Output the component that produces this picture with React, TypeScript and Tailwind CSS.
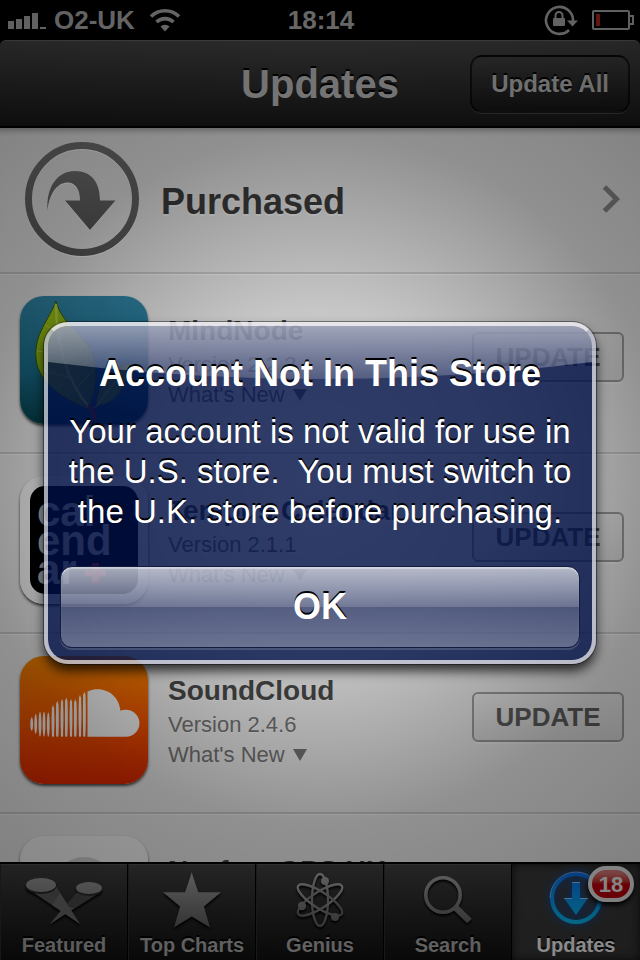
import type { ReactNode } from 'react';

type AppUpdate = {
  name: string;
  version: string;
  icon: ReactNode;
};

/* App icons */

function MindNodeIcon() {
  return (
    <svg viewBox="0 0 128 128" className="h-full w-full" aria-hidden="true">
      <defs>
        <linearGradient id="mn-bg" x1="0" y1="0" x2="0" y2="1">
          <stop offset="0" stopColor="#3289ab" />
          <stop offset="0.6" stopColor="#176884" />
          <stop offset="1" stopColor="#053e49" />
        </linearGradient>
        <linearGradient id="mn-leaf" x1="0" y1="0" x2="1" y2="1">
          <stop offset="0" stopColor="#a9cf19" />
          <stop offset="0.5" stopColor="#7fae0c" />
          <stop offset="1" stopColor="#3f6f12" />
        </linearGradient>
      </defs>
      <rect width="128" height="128" rx="24" fill="url(#mn-bg)" />
      <path
        d="M36 5C29 24 14 38 16 62C18 88 46 104 68 113C80 88 79 62 64 44C54 32 41 24 36 5Z"
        fill="url(#mn-leaf)"
        stroke="#35560f"
        strokeWidth="1"
      />
      <path
        d="M110 67C94 72 77 84 76 110C92 108 106 98 110 67Z"
        fill="#5d8d1c"
        stroke="#35560f"
        strokeWidth="1"
      />
      <g fill="none" stroke="#c3d956" strokeOpacity="0.75">
        <path d="M36 8C36 45 46 86 70 112" strokeWidth="2.5" />
        <path d="M37 36L25 29M38 38L50 30M41 58L17 55M44 68L66 48M50 82L23 74M56 93L75 72M107 70L75 112" />
      </g>
      <path d="M69 108C72 114 74 118 75 124" fill="none" stroke="#7c2b15" strokeWidth="4" />
    </svg>
  );
}

function CalendarIcon() {
  return (
    <svg viewBox="0 0 128 128" className="h-full w-full" aria-hidden="true">
      <rect width="128" height="128" rx="24" fill="#f4f4f4" />
      <rect x="10" y="10" width="108" height="108" rx="15" fill="#000" />
      <g fill="#c4c4c4" fontFamily="Liberation Sans, Arial, sans-serif" fontWeight="700" fontSize="42">
        <text x="17" y="50">cal</text>
        <text x="17" y="79">end</text>
        <text x="17" y="108">ar</text>
      </g>
      <path d="M72 87h7v7h7v6h-7v7h-7v-7h-7v-6h7z" fill="#e01a1a" />
    </svg>
  );
}

const soundBars = [
  [11.7, 61.3, 74.7],
  [15.7, 58, 78],
  [20, 55.7, 80.7],
  [24, 55.7, 80.7],
  [28.3, 56.3, 80.7],
  [33, 49.3, 80.7],
  [37.3, 45, 80.7],
  [42, 43, 80.7],
  [46.3, 41.7, 80.7],
  [51, 43, 80.7],
  [55.3, 43.3, 80.7],
  [60, 39, 80.7],
  [64.3, 35.7, 80.7],
];

function SoundCloudIcon() {
  return (
    <svg viewBox="0 0 128 128" className="h-full w-full" aria-hidden="true">
      <defs>
        <linearGradient id="sc-bg" x1="0" y1="0" x2="0" y2="1">
          <stop offset="0" stopColor="#ef8200" />
          <stop offset="0.5" stopColor="#ee5400" />
          <stop offset="1" stopColor="#dc2700" />
        </linearGradient>
      </defs>
      <rect width="128" height="128" rx="24" fill="url(#sc-bg)" />
      <g fill="#f4f4f4">
        {soundBars.map(([x, top, bottom]) => (
          <ellipse
            key={x}
            cx={x}
            cy={(top + bottom) / 2}
            rx="1.4"
            ry={(bottom - top) / 2}
          />
        ))}
        {soundBars.slice(5).map(([x, top, bottom]) => (
          <rect key={x} x={x - 1.1} y={top + 2} width="2.2" height={bottom - top - 2} rx="1" />
        ))}
        <path d="M67.5 35.5C71 33.7 74 33.2 77.5 33.2C90 33.2 99.6 42.5 100.4 54.8C102 54.1 104 53.8 106 53.8A13.4 13.4 0 0 1 106 80.7H67.5Z" />
      </g>
    </svg>
  );
}

function NavfreeIcon() {
  return (
    <svg viewBox="0 0 128 128" className="h-full w-full" aria-hidden="true">
      <rect width="128" height="128" rx="24" fill="#f4f4f4" />
      <circle cx="64" cy="53" r="32" fill="#cfcfcf" />
      <circle cx="64" cy="57" r="30" fill="#e4e4e4" />
    </svg>
  );
}

/* Tab bar icons, all painted with the same top to bottom grey */

function TabIcon({ id, children }: { id: string; children: ReactNode }) {
  return (
    <svg
      viewBox="0 0 84 60"
      className="h-[60px] w-[84px] drop-shadow-[0_2px_1px_#000]"
      aria-hidden="true"
    >
      <defs>
        <linearGradient id={id} gradientUnits="userSpaceOnUse" x1="0" y1="0" x2="0" y2="60">
          <stop offset="0" stopColor="#a0a0a0" />
          <stop offset="1" stopColor="#585858" />
        </linearGradient>
      </defs>
      {children}
    </svg>
  );
}

function FeaturedIcon() {
  return (
    <TabIcon id="tab-featured">
      <path d="M55 22L28 54L79 22Z" fill="#484848" />
      <path d="M52 38L28 54L42 37Z" fill="#686868" />
      <path d="M6 19L58 54L34 16Z" fill="#585858" />
      <path d="M38 23L58 54L30 35Z" fill="#747474" fillOpacity="0.6" />
      <ellipse cx="67" cy="20" rx="13" ry="6" fill="#2a2a2a" />
      <ellipse cx="67" cy="18" rx="13" ry="6" fill="url(#tab-featured)" />
      <ellipse cx="19" cy="17" rx="15" ry="7" fill="#2a2a2a" />
      <ellipse cx="19" cy="15" rx="15" ry="7" fill="url(#tab-featured)" />
    </TabIcon>
  );
}

function TopChartsIcon() {
  return (
    <TabIcon id="tab-charts">
      <path
        d="M41.7 2.3L48.3 22.3H71L54 36.5L60 57.5L41.7 46.5L24 57.5L30 36.5L13 22.3H35Z"
        fill="url(#tab-charts)"
      />
    </TabIcon>
  );
}

function GeniusIcon() {
  return (
    <TabIcon id="tab-genius">
      <g fill="none" stroke="url(#tab-genius)" strokeWidth="2.4">
        <ellipse cx="42" cy="30" rx="8" ry="26" />
        <ellipse cx="42" cy="30" rx="8" ry="26" transform="rotate(57 42 30)" />
        <ellipse cx="42" cy="30" rx="8" ry="26" transform="rotate(-57 42 30)" />
      </g>
      <g fill="url(#tab-genius)">
        <circle cx="47" cy="11" r="4" />
        <circle cx="24" cy="36" r="4.2" />
        <circle cx="57" cy="47" r="4" />
      </g>
    </TabIcon>
  );
}

function SearchIcon() {
  return (
    <TabIcon id="tab-search">
      <g fill="none" stroke="url(#tab-search)">
        <circle cx="37" cy="25" r="17.2" strokeWidth="3.6" />
        <path d="M50 38L63.5 51" strokeWidth="6.5" />
      </g>
    </TabIcon>
  );
}

function UpdatesIcon() {
  return (
    <svg
      viewBox="0 0 84 60"
      className="h-[60px] w-[84px] overflow-visible drop-shadow-[0_0_4px_#0050c0]"
      aria-hidden="true"
    >
      <defs>
        <linearGradient id="tab-updates" gradientUnits="userSpaceOnUse" x1="0" y1="0" x2="0" y2="54">
          <stop offset="0" stopColor="#0a68e8" />
          <stop offset="1" stopColor="#08bdf0" />
        </linearGradient>
      </defs>
      <circle cx="42" cy="28" r="24" fill="none" stroke="url(#tab-updates)" strokeWidth="4" />
      <path d="M16 28A26 26 0 0 1 68 28" fill="none" stroke="#c8e4ff" strokeOpacity="0.5" />
      <path d="M38 12H46V28H54L42 45L30 28H38Z" fill="url(#tab-updates)" />
      <path d="M38 12.5H46M30 28.5H38M46 28.5H54" stroke="#c8e4ff" strokeOpacity="0.7" />
    </svg>
  );
}

const updates: AppUpdate[] = [
  { name: 'MindNode', version: '2.2.2', icon: <MindNodeIcon /> },
  { name: 'Tempus Calendar', version: '2.1.1', icon: <CalendarIcon /> },
  { name: 'SoundCloud', version: '2.4.6', icon: <SoundCloudIcon /> },
  { name: 'Navfree GPS UK', version: '1.8.2', icon: <NavfreeIcon /> },
];

const tabs = [
  { label: 'Featured', icon: <FeaturedIcon /> },
  { label: 'Top Charts', icon: <TopChartsIcon /> },
  { label: 'Genius', icon: <GeniusIcon /> },
  { label: 'Search', icon: <SearchIcon /> },
  { label: 'Updates', icon: <UpdatesIcon />, badge: 18 },
];

function StatusBar() {
  return (
    <div className="grid h-10 shrink-0 grid-cols-[1fr_auto_1fr] items-center bg-black pr-1.5 pl-2 text-[26px] leading-10 font-bold text-[#b4b4b4]">
      <div className="flex items-center gap-2">
        <svg viewBox="0 0 38 20" className="h-5 w-[38px]" fill="currentColor" aria-hidden="true">
          <path d="M0 11h6v8H0zM8 9h6v10H8zM16 6h6v13h-6zM24 3h6v16h-6zM32 17h6v2h-6z" />
        </svg>
        <span>O2-UK</span>
        <svg viewBox="0 0 32 24" className="ml-1.5 h-6 w-8" aria-hidden="true">
          <g fill="none" stroke="currentColor" strokeWidth="3.6">
            <path d="M2 8.5A20 20 0 0 1 30 8.5" />
            <path d="M7.5 14A12.5 12.5 0 0 1 24.5 14" />
          </g>
          <path d="M11.5 18.5A6.5 6.5 0 0 1 20.5 18.5L16 23.5Z" fill="currentColor" />
        </svg>
      </div>
      <span>18:14</span>
      <div className="flex items-center justify-end gap-3.5">
        <svg viewBox="0 0 34 32" className="h-8 w-[34px]" aria-hidden="true">
          <path
            d="M25 26A13.5 13.5 0 1 1 29 17"
            fill="none"
            stroke="currentColor"
            strokeWidth="2.6"
          />
          <path d="M23 16.5H34L28.5 22.5Z" fill="currentColor" />
          <rect x="9" y="14" width="12" height="8" rx="1" fill="currentColor" />
          <path d="M11.5 15V11.5A3.5 3.5 0 0 1 18.5 11.5V15" fill="none" stroke="currentColor" strokeWidth="2" />
        </svg>
        <svg viewBox="0 0 42 20" className="h-5 w-[42px]" aria-hidden="true">
          <rect x="1" y="1" width="36" height="18" rx="1" fill="none" stroke="currentColor" strokeWidth="2" />
          <path d="M38 6h3v8h-3" fill="none" stroke="currentColor" strokeWidth="2" />
          <rect x="4" y="4" width="4" height="12" fill="#b8281e" />
        </svg>
      </div>
    </div>
  );
}

function NavBar() {
  return (
    <header className="grid h-[88px] shrink-0 grid-cols-[1fr_auto_1fr] items-center rounded-t-md border-t border-b-2 border-t-[#666] border-b-black bg-linear-to-b from-[#484848] to-[#181818] px-2.5">
      <h1 className="col-start-2 text-[40px] font-bold text-[#c0c0c0] [text-shadow:0_-2px_0_#000]">
        Updates
      </h1>
      <button
        type="button"
        className="h-[58px] justify-self-end rounded-xl border-2 border-black/60 bg-linear-to-b from-[#424242] to-[#161616] px-[19px] text-2xl font-bold text-[#c0c0c0] shadow-[0_1px_0_#444] [text-shadow:0_-2px_0_#000]"
      >
        Update All
      </button>
    </header>
  );
}

function PurchasedRow() {
  return (
    <a
      href="#purchased"
      className="flex items-center border-b-2 border-b-[#cacaca] pt-3.5 pr-5 pb-4 pl-[25px] shadow-[inset_0_8px_6px_-6px_rgba(0,0,0,0.35)]"
    >
      <svg viewBox="0 0 114 114" className="h-[114px] w-[114px] drop-shadow-[0_1px_0_#fff]" aria-hidden="true">
        <defs>
          <linearGradient id="purchased" x1="0" y1="0" x2="0" y2="1">
            <stop offset="0" stopColor="#727272" />
            <stop offset="1" stopColor="#5c5c5c" />
          </linearGradient>
        </defs>
        <circle cx="57" cy="57" r="53.5" fill="none" stroke="url(#purchased)" strokeWidth="7" />
        <path
          d="M22.5 69C21 44 33 29 50 29C66 29 75 40 75 58.5H90.5L65 88L40 58.5H55C55 48 51 40.5 42 40.5C32 41 24 52 22.5 69Z"
          fill="url(#purchased)"
        />
      </svg>
      <span className="ml-[22px] flex-1 pt-1.5 text-4xl font-bold text-[#3c3c3c] [text-shadow:0_2px_0_rgba(255,255,255,0.5)]">
        Purchased
      </span>
      <svg viewBox="0 0 18 28" className="h-7 w-[18px]" aria-hidden="true">
        <path d="M2.5 2L14.5 14L2.5 26" fill="none" stroke="#8a8a8a" strokeWidth="5" />
      </svg>
    </a>
  );
}

function UpdateRow({ name, version, icon }: AppUpdate) {
  return (
    <li className="flex items-center border-b-2 border-b-[#cacaca] pt-[22px] pr-4 pb-7 pl-5 shadow-[inset_0_1px_0_#f6f6f6]">
      <div className="h-32 w-32 shrink-0 rounded-3xl shadow-[0_2px_3px_rgba(0,0,0,0.7)]">{icon}</div>
      <div className="ml-5 flex-1 pt-0.5 text-[22px] leading-[30px] text-[#747474] [text-shadow:0_1px_0_rgba(255,255,255,0.5)]">
        <h2 className="text-[28px] leading-[38px] font-bold whitespace-nowrap text-[#484848]">{name}</h2>
        <p>Version {version}</p>
        <button type="button" className="flex items-center gap-2">
          What&apos;s New
          <svg viewBox="0 0 14 12" className="h-3 w-3.5" fill="currentColor" aria-hidden="true">
            <path d="M0 0H14L7 12Z" />
          </svg>
        </button>
      </div>
      <button
        type="button"
        className="mb-1.5 h-[50px] w-[152px] rounded-md border-2 border-[#9a9a9a] bg-linear-to-b from-[#e8e8e8] to-[#dadada] text-[26px] font-bold text-[#5c5c5c] shadow-[0_2px_0_rgba(255,255,255,0.3)]"
      >
        UPDATE
      </button>
    </li>
  );
}

function TabBar() {
  return (
    <nav className="grid shrink-0 grid-cols-5 border-t-2 border-black bg-linear-to-b from-[#3e3e3e] to-[#101010]">
      {tabs.map(({ label, icon, badge }) => (
        <a
          key={label}
          href={`#${label.toLowerCase().replace(' ', '-')}`}
          aria-current={badge ? 'page' : undefined}
          className="group relative flex flex-col items-center pt-1.5 shadow-[inset_-1px_0_0_#000,inset_1px_0_0_#2c2c2c,inset_0_1px_0_#4c4c4c] aria-[current]:bg-[#383838] aria-[current]:shadow-[inset_0_0_10px_#111]"
        >
          {icon}
          <span className="text-xl leading-[30px] font-bold text-[#aaa] [text-shadow:0_-2px_0_#000] group-aria-[current]:text-white">
            {label}
          </span>
          {badge && (
            <span className="absolute top-0.5 right-1.5 flex h-9 w-[46px] items-center justify-center rounded-full border-4 border-[#e8e8e8] bg-linear-to-b from-[#d87878] from-10% via-[#c00010] via-50% to-[#c0000c] text-[22px] font-bold text-[#f0f0f0] shadow-[0_3px_5px_#000]">
              {badge}
            </span>
          )}
        </a>
      ))}
    </nav>
  );
}

function StoreAlert() {
  return (
    <div className="absolute inset-0 flex items-center justify-center bg-[radial-gradient(circle_farthest-corner_at_center,rgba(0,0,0,0.04)_0%,rgba(0,0,0,0.15)_30%,rgba(0,0,0,0.38)_60%,rgba(0,0,0,0.48)_100%)] px-11 pt-[26px]">
      <div
        role="alertdialog"
        aria-modal="true"
        aria-labelledby="alert-title"
        aria-describedby="alert-message"
        className="relative w-full max-w-[552px] rounded-3xl border-4 border-[#c0c2d2]/85 border-t-[#e8e8ee]/90 bg-[#000f48]/78 bg-clip-padding px-3 pt-7 pb-3 text-center text-white shadow-[0_0_0_1px_rgba(0,0,0,0.4),0_7px_12px_rgba(0,0,0,0.75)] [text-shadow:0_-2px_0_#000]"
      >
        {/* Gloss */}
        <svg
          viewBox="0 0 544 54"
          preserveAspectRatio="none"
          className="absolute inset-x-0 top-0 h-[54px] w-full rounded-t-[20px]"
          aria-hidden="true"
        >
          <defs>
            <linearGradient id="gloss" x1="0" y1="0" x2="0" y2="1">
              <stop offset="0" stopColor="#fff" stopOpacity="0.55" />
              <stop offset="1" stopColor="#fff" stopOpacity="0.18" />
            </linearGradient>
          </defs>
          <path d="M0 0H544V36Q272 70 0 36Z" fill="url(#gloss)" />
        </svg>

        <h2 id="alert-title" className="relative text-4xl leading-10 font-bold">
          Account Not In This Store
        </h2>
        <p id="alert-message" className="relative mt-[18px] text-[33px] leading-10">
          Your account is not valid for use in the U.S. store.{'\u00a0 '}You must switch to the U.K. store
          before purchasing.
        </p>
        <button
          type="button"
          className="relative mt-[34px] h-[82px] w-full rounded-xl border border-[#101c40] bg-[linear-gradient(to_bottom,rgba(255,255,255,0.66),rgba(255,255,255,0.32)_50%,rgba(255,255,255,0.19)_50%,rgba(255,255,255,0.3))] text-4xl font-bold shadow-[inset_0_2px_1px_rgba(255,255,255,0.4),0_2px_0_rgba(255,255,255,0.15)] [text-shadow:0_-2px_0_#000]"
        >
          OK
        </button>
      </div>
    </div>
  );
}

export default function App() {
  return (
    <div className="relative flex h-screen flex-col overflow-hidden bg-black font-['Liberation_Sans',Arial,sans-serif]">
      <StatusBar />
      <NavBar />
      <main className="min-h-0 flex-1 overflow-hidden bg-[#e8e8e8]">
        <PurchasedRow />
        <ul>
          {updates.map((update) => (
            <UpdateRow key={update.name} {...update} />
          ))}
        </ul>
      </main>
      <TabBar />
      <StoreAlert />
    </div>
  );
}
